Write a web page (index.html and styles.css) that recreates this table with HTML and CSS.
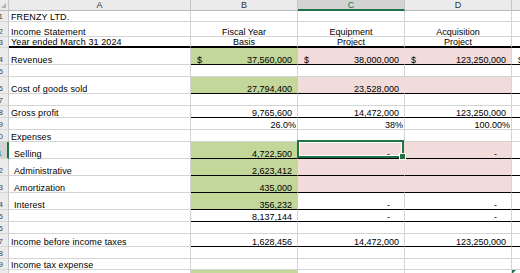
FILE: index.html
```html
<!DOCTYPE html>
<html lang="en">
<head>
<meta charset="utf-8">
<title>Income Statement</title>
<link rel="stylesheet" href="styles.css">
</head>
<body>
<div class="sheet">
  <!-- header -->
  <div class="corner"><div class="tri"></div></div>
  <div class="ch">A</div>
  <div class="ch">B</div>
  <div class="ch sel">C</div>
  <div class="ch">D</div>
  <div class="ch">E</div>

  <!-- row 1 -->
  <div class="rh">1</div>
  <div class="c lbl">FRENZY LTD.</div>
  <div class="c"></div><div class="c"></div><div class="c"></div><div class="c"></div>

  <!-- row 2 -->
  <div class="rh">2</div>
  <div class="c lbl">Income Statement</div>
  <div class="c ctr">Fiscal Year</div>
  <div class="c ctr">Equipment</div>
  <div class="c ctr">Acquisition</div>
  <div class="c"></div>

  <!-- row 3 -->
  <div class="rh">3</div>
  <div class="c lbl tb">Year ended March 31 2024</div>
  <div class="c ctr tb">Basis</div>
  <div class="c ctr tb">Project</div>
  <div class="c ctr tb">Project</div>
  <div class="c tb"></div>

  <!-- row 4 -->
  <div class="rh">4</div>
  <div class="c lbl">Revenues</div>
  <div class="c acct g bb"><span>$</span><span>37,560,000</span></div>
  <div class="c acct p bb"><span>$</span><span>38,000,000</span></div>
  <div class="c acct p last bb"><span>$</span><span>123,250,000</span></div>
  <div class="c acct bb"><span>$</span></div>

  <!-- row 5 -->
  <div class="rh">5</div>
  <div class="c"></div><div class="c"></div><div class="c"></div><div class="c"></div><div class="c"></div>

  <!-- row 6 -->
  <div class="rh">6</div>
  <div class="c lbl">Cost of goods sold</div>
  <div class="c num g bb">27,794,400</div>
  <div class="c num p bb">23,528,000</div>
  <div class="c num p last bb"></div>
  <div class="c bb"></div>

  <!-- row 7 -->
  <div class="rh">7</div>
  <div class="c"></div><div class="c"></div><div class="c"></div><div class="c"></div><div class="c"></div>

  <!-- row 8 -->
  <div class="rh">8</div>
  <div class="c lbl">Gross profit</div>
  <div class="c num bb">9,765,600</div>
  <div class="c num bb">14,472,000</div>
  <div class="c num bb">123,250,000</div>
  <div class="c bb"></div>

  <!-- row 9 -->
  <div class="rh">9</div>
  <div class="c"></div>
  <div class="c pct">26.0%</div>
  <div class="c pct">38%</div>
  <div class="c pct">100.00%</div>
  <div class="c"></div>

  <!-- row 10 -->
  <div class="rh">10</div>
  <div class="c lbl">Expenses</div>
  <div class="c"></div><div class="c"></div><div class="c"></div><div class="c"></div>

  <!-- row 11 -->
  <div class="rh sel">11</div>
  <div class="c lbl ind">Selling</div>
  <div class="c num g bb">4,722,500</div>
  <div class="c dash p bb active">-<div class="selbox"><div class="handle"></div></div></div>
  <div class="c dash p last bb">-</div>
  <div class="c bb"></div>

  <!-- row 12 -->
  <div class="rh">12</div>
  <div class="c lbl ind">Administrative</div>
  <div class="c num g bb">2,623,412</div>
  <div class="c p bb"></div>
  <div class="c p last bb"></div>
  <div class="c bb"></div>

  <!-- row 13 -->
  <div class="rh">13</div>
  <div class="c lbl ind">Amortization</div>
  <div class="c num g bb">435,000</div>
  <div class="c p bb"></div>
  <div class="c p last bb"></div>
  <div class="c bb"></div>

  <!-- row 14 -->
  <div class="rh">14</div>
  <div class="c lbl ind">Interest</div>
  <div class="c num g bb">356,232</div>
  <div class="c dash bb">-</div>
  <div class="c dash bb">-</div>
  <div class="c bb"></div>

  <!-- row 15 -->
  <div class="rh">15</div>
  <div class="c"></div>
  <div class="c num bb">8,137,144</div>
  <div class="c dash bb">-</div>
  <div class="c dash bb">-</div>
  <div class="c bb"></div>

  <!-- row 16 -->
  <div class="rh">16</div>
  <div class="c"></div><div class="c"></div><div class="c"></div><div class="c"></div><div class="c"></div>

  <!-- row 17 -->
  <div class="rh">17</div>
  <div class="c lbl">Income before income taxes</div>
  <div class="c num bb">1,628,456</div>
  <div class="c num bb">14,472,000</div>
  <div class="c num bb">123,250,000</div>
  <div class="c bb"></div>

  <!-- row 18 -->
  <div class="rh">18</div>
  <div class="c"></div><div class="c"></div><div class="c"></div><div class="c"></div><div class="c"></div>

  <!-- row 19 -->
  <div class="rh">19</div>
  <div class="c lbl">Income tax expense</div>
  <div class="c"></div><div class="c"></div><div class="c"></div><div class="c"></div>

  <!-- row 20 -->
  <div class="rh">20</div>
  <div class="c"></div>
  <div class="c g"></div>
  <div class="c"></div>
  <div class="c"></div>
  <div class="c errcell"><div class="err"></div></div>
</div>
</body>
</html>
```

FILE: styles.css
```css
* {
  box-sizing: border-box;
  margin: 0;
  padding: 0;
}

html,
body {
  width: 520px;
  height: 273px;
  overflow: hidden;
  background: #ffffff;
}

body {
  font-family: "Liberation Sans", Arial, sans-serif;
  font-size: 9px;
  color: #000000;
}

.sheet {
  display: grid;
  grid-template-columns: 9px 182px 107px 107px 107px 107px;
  grid-template-rows: 11px 11px 15px 11px 17px 12px 17px 12px 12px 12px 12px 17px 17px 17px 17px 12px 12px 13px 12px 11px 12px;
  width: max-content;
}

/* headers */
.corner {
  background: #ebebeb;
  border-right: 1px solid #c6c6c6;
  border-bottom: 1px solid #b9b9b9;
  display: flex;
  justify-content: flex-end;
  align-items: flex-end;
  padding: 0 2px 2px 0;
}

.tri {
  width: 0;
  height: 0;
  border-left: 5px solid transparent;
  border-bottom: 5px solid #b3b3b3;
}

.ch {
  background: #ebebeb;
  border-right: 1px solid #c6c6c6;
  border-bottom: 1px solid #b9b9b9;
  display: flex;
  justify-content: center;
  align-items: center;
  line-height: 10px;
  font-size: 9px;
  color: #333333;
}

.ch.sel {
  background: #d3d3d3;
  color: #217346;
  border-bottom: 2px solid #217346;
}

.rh {
  background: #ebebeb;
  border-right: 1px solid #c6c6c6;
  border-bottom: 1px solid #d6d6d6;
  display: flex;
  justify-content: flex-end;
  align-items: flex-end;
  padding-right: 5px;
  overflow: hidden;
  white-space: nowrap;
  font-size: 8px;
  line-height: 9px;
  color: #444444;
}

.rh.sel {
  background: #d3d3d3;
  border-right: 2px solid #217346;
  color: #217346;
}

/* cells */
.c {
  border-right: 1px solid #d4d4d4;
  border-bottom: 1px solid #d4d4d4;
  display: flex;
  align-items: flex-end;
  line-height: 8px;
  white-space: nowrap;
  padding: 0 3px;
}

.lbl {
  padding-left: 2px;
  letter-spacing: 0.1px;
}

.ind {
  padding-left: 5px;
}

.ctr {
  justify-content: center;
}

.num {
  justify-content: flex-end;
  padding-right: 5px;
}

.acct {
  justify-content: space-between;
  padding-left: 6px;
  padding-right: 5px;
}

.pct {
  justify-content: flex-end;
  padding-right: 1px;
}

.dash {
  justify-content: flex-end;
  padding-right: 14px;
}

.g {
  background: #c4d79b;
  border-right-color: #c4d79b;
}

.p {
  background: #f2dcdb;
  border-right-color: #f2dcdb;
}

.p.last {
  border-right-color: #d4d4d4;
}

.bb {
  border-bottom-color: #000000;
}

.tb {
  border-bottom: 2px solid #000000;
}

/* selection */
.active {
  position: relative;
}

.selbox {
  position: absolute;
  top: -2px;
  left: -1px;
  right: 0;
  bottom: 0;
  border: 2px solid #217346;
  box-shadow: inset 0 0 0 1px #ffffff;
}

.handle {
  position: absolute;
  right: -4px;
  bottom: -4px;
  width: 7px;
  height: 7px;
  background: #217346;
  border: 1px solid #ffffff;
}

.errcell {
  align-items: flex-start;
  padding: 0;
}

.err {
  width: 0;
  height: 0;
  border-top: 4px solid #217346;
  border-right: 4px solid transparent;
}
```
